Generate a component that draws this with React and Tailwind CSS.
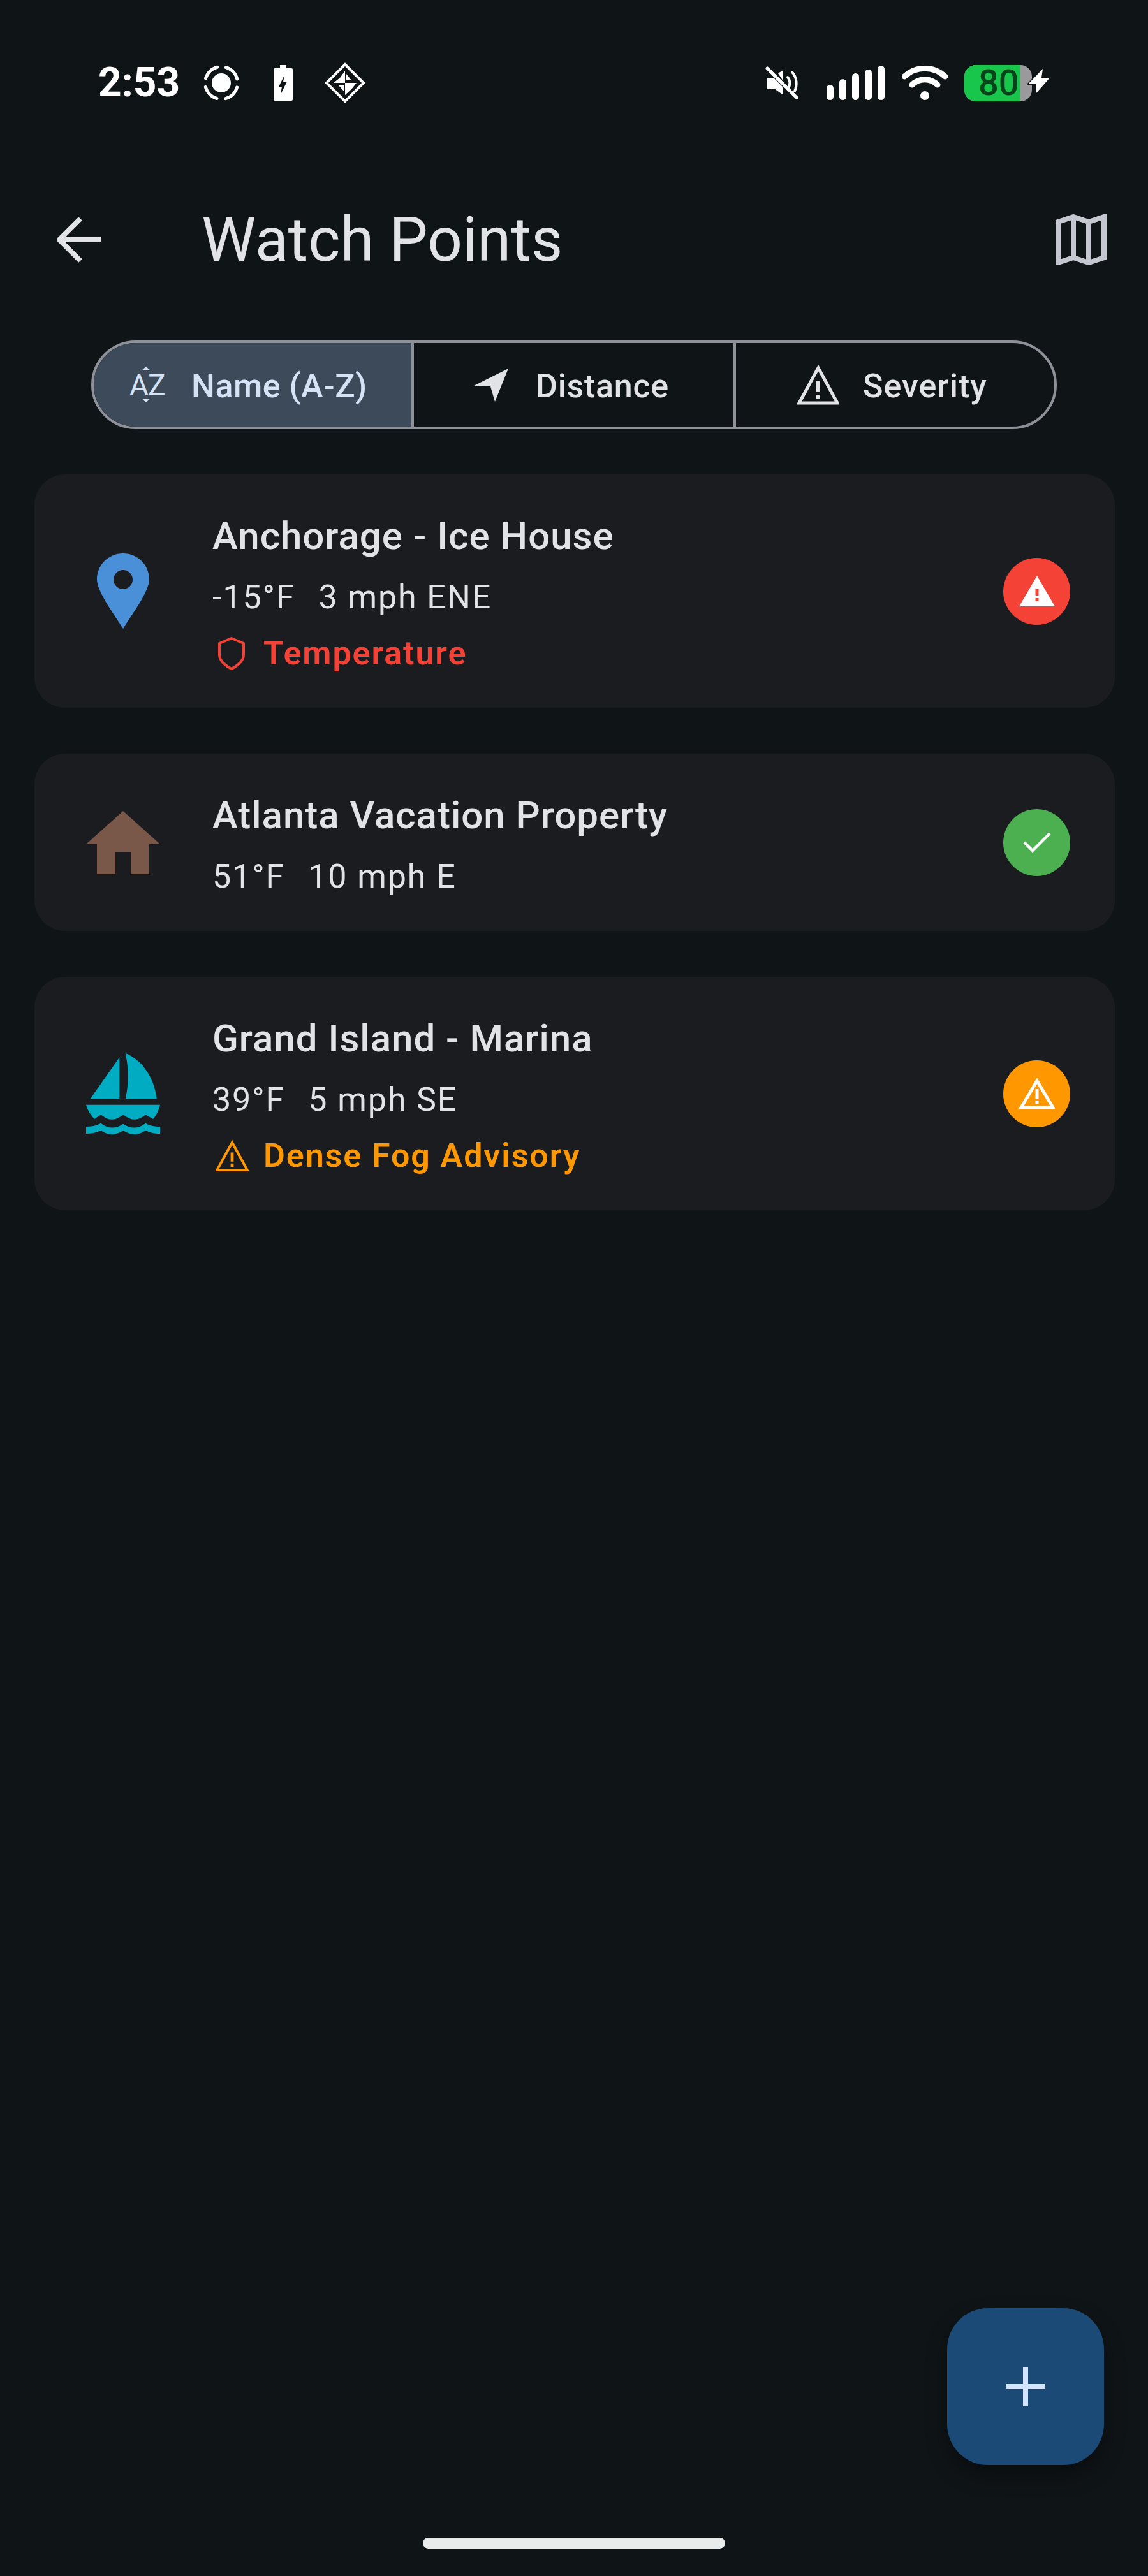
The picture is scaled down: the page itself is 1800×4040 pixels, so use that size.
// App.jsx
const roboto = "font-['Roboto',sans-serif]";

function StatusBar() {
  return (
    <div className="flex items-center h-[66px] mt-[97px] pl-[154px] pr-[152px] text-white">
      <span className="text-[64px] leading-[66px] font-bold w-[164px]">2:53</span>
      {/* screen record */}
      <svg width="58" height="58" viewBox="0 0 58 58">
        <circle cx="29" cy="29" r="15" fill="#fff" />
        <circle cx="29" cy="29" r="25.5" fill="none" stroke="#fff" strokeWidth="5" strokeDasharray="26 14" strokeDashoffset="-7" strokeLinecap="round" />
      </svg>
      {/* charging battery */}
      <svg width="30" height="56" viewBox="0 0 30 56" className="ml-[53px]">
        <path fillRule="evenodd" fill="#fff" d="M10 0h10v5h8a2 2 0 0 1 2 2v47a2 2 0 0 1-2 2H2a2 2 0 0 1-2-2V7a2 2 0 0 1 2-2h8zM17 16L8 34h5l-2 12 10-20h-6z" />
      </svg>
      {/* vpn diamond */}
      <svg width="64" height="64" viewBox="0 0 64 64" className="ml-[50px]">
        <path d="M32 3L61 32 32 61 3 32z" fill="none" stroke="#fff" strokeWidth="4" />
        <path d="M32 13v19H14l10-8zM32 32h18l-8 10-10 9z" fill="#fff" />
        <path d="M34 18l8 10h-8zM30 36v9l-8-9z" fill="#fff" />
      </svg>
      <div className="flex-1" />
      {/* muted */}
      <svg width="52" height="52" viewBox="0 0 52 52">
        <path d="M3 19h11l14 14v12L14 35H3z" fill="#fff" />
        <path d="M20 11l8-5v17z" fill="#fff" />
        <path d="M35 17c4 5 4 11 2 16M42 9c8 9 8 21 4 30" fill="none" stroke="#fff" strokeWidth="4" strokeLinecap="round" />
        <path d="M3 3l47 47" stroke="#fff" strokeWidth="5" strokeLinecap="round" />
      </svg>
      {/* signal */}
      <div className="flex items-end gap-[9px] h-[54px] ml-[44px]">
        <div className="w-[11px] h-[24px] rounded-full bg-white" />
        <div className="w-[11px] h-[33px] rounded-full bg-white" />
        <div className="w-[11px] h-[42px] rounded-full bg-white" />
        <div className="w-[11px] h-[48px] rounded-full bg-white" />
        <div className="w-[11px] h-[54px] rounded-full bg-white" />
      </div>
      {/* wifi */}
      <svg width="72" height="54" viewBox="0 0 72 54" className="ml-[27px]">
        <path d="M4 17C22 0 50 0 68 17M16 30C27 19 45 19 56 30" fill="none" stroke="#fff" strokeWidth="9" strokeLinecap="round" />
        <circle cx="36" cy="47" r="7" fill="#fff" />
      </svg>
      {/* battery */}
      <div className="flex ml-[26px] w-[106px] h-[57px] rounded-[18px] bg-[#9a9a9c]">
        <div className="w-[87px] h-full rounded-l-[18px] bg-[#17c64a] flex items-center pl-[22px]">
          <span className="text-[56px] leading-[57px] font-medium text-[#06451c]">80</span>
        </div>
      </div>
      <svg width="38" height="42" viewBox="0 0 38 42" className="-ml-[8px] -mt-[4px] relative">
        <path d="M25 1L2 25H15L14 40L36 15H23z" fill="#fff" stroke="#10151a" strokeWidth="3" paintOrder="stroke" />
      </svg>
    </div>
  );
}

function AppHeader() {
  return (
    <div className="flex items-center h-[96px] mt-[165px] pl-[89px] pr-[65px]">
      <svg width="72" height="72" viewBox="0 0 72 72">
        <path d="M70 36H6M37 3L4 36l33 33" fill="none" stroke="#e2e3e7" strokeWidth="8" />
      </svg>
      <h1 className="ml-[155px] text-[96px] leading-[96px] font-normal text-[#e2e3e7] flex-1">Watch Points</h1>
      <svg width="80" height="80" viewBox="0 0 80 80">
        <path d="M4 12l24-8 24 8 24-8v64l-24 8-24-8-24 8zM28 4v64M52 12v64" fill="none" stroke="#c4c7cf" strokeWidth="8" />
      </svg>
    </div>
  );
}

function SortTabs() {
  return (
    <div className="flex h-[139px] mt-[110px] mx-[143px] rounded-full border-[4px] border-[#8e9197] overflow-hidden">
      <div className="w-[502px] flex items-center bg-[#3d4a5a] text-[#d6e3f7] border-r-[4px] border-[#8e9197]">
        <svg width="60" height="58" viewBox="0 0 60 58" className="ml-[53px]">
          <path d="M29 0l7 6H22zM29 56l7-6H22z" fill="#d6e3f7" />
          <text x="3" y="45" fontSize="46" letterSpacing="-1" fill="#d6e3f7">AZ</text>
        </svg>
        <span className="ml-[40px] mt-[4px] text-[52px] tracking-[0.5px] font-medium leading-none">Name (A-Z)</span>
      </div>
      <div className="w-[505px] flex items-center text-[#e2e3e7] border-r-[4px] border-[#8e9197]">
        <svg width="54" height="52" viewBox="0 0 54 52" className="ml-[94px]">
          <path d="M54 0L0 27l26 1 7 24z" fill="#e2e3e7" />
        </svg>
        <span className="ml-[43px] mt-[4px] text-[52px] tracking-[0.7px] font-medium leading-none">Distance</span>
      </div>
      <div className="flex-1 flex items-center text-[#e2e3e7]">
        <WarnOutline size={66} color="#e2e3e7" className="ml-[96px]" />
        <span className="ml-[37px] mt-[4px] text-[52px] tracking-[1px] font-medium leading-none">Severity</span>
      </div>
    </div>
  );
}

function WarnOutline({ size, color, className }) {
  return (
    <svg width={size} height={size} viewBox="0 0 66 66" className={className}>
      <path d="M33 6L3 61h60z" fill="none" stroke={color} strokeWidth="5" />
      <path d="M30 26h6v18h-6zM30 48h6v7h-6z" fill={color} />
    </svg>
  );
}

function PinIcon() {
  return (
    <svg width="82" height="118" viewBox="0 0 82 118">
      <path fillRule="evenodd" fill="#4a90d9" d="M41 0C18 0 0 18 0 41C0 60 30 100 41 118C52 100 82 60 82 41C82 18 64 0 41 0zM41 26a15 15 0 1 1 0 30 15 15 0 0 1 0-30z" />
    </svg>
  );
}

function HomeIcon() {
  return (
    <svg width="116" height="99" viewBox="0 0 116 99">
      <path fill="#7a5849" d="M58 0L116 52H99V99H70V64H46V99H17V52H0z" />
    </svg>
  );
}

function BoatIcon() {
  return (
    <svg width="118" height="129" viewBox="0 0 118 129">
      <path fill="#00acc1" d="M53.300 7.300V72.300H7.700zM62.700 0.700C90 12 108 40 111.700 72.300H62.700C68 50 68 25 62.700 0.700z" />
      <path fill="#00acc1" d="M1 81.700H117C115 90 112 97 106 104L94.300 97.300Q77 112 59.300 97.300Q41 112 24.300 97.300L14 104C8 97 3 90 1 81.700z" />
      <path fill="#00acc1" d="M1 116C10 116 18 114 24.300 110.700Q41 124 59.300 111.700Q77 124 94.300 110.700C100 114 108 116 117 116V127C108 127 100 125 94.300 122Q77 134 59.300 122Q41 134 24.300 122C18 125 10 127 1 127z" />
    </svg>
  );
}

function StatusBadge({ kind }) {
  const bg = kind === "red" ? "bg-[#f44336]" : kind === "green" ? "bg-[#4caf50]" : "bg-[#ff9800]";
  return (
    <div className={`w-[105px] h-[105px] rounded-full flex items-center justify-center shrink-0 ${bg}`}>
      {kind === "red" && (
        <svg width="56" height="48" viewBox="0 0 56 48">
          <path fillRule="evenodd" fill="#fff" d="M28 0L56 48H0zM25.500 20V31H30.500V20zM25.500 35V40H30.500V35z" />
        </svg>
      )}
      {kind === "green" && (
        <svg width="44" height="34" viewBox="0 0 44 34">
          <path d="M2 17l13 13L42 3" fill="none" stroke="#fff" strokeWidth="4.5" />
        </svg>
      )}
      {kind === "orange" && (
        <svg width="56" height="48" viewBox="0 0 56 48">
          <path d="M28 4L3 46h50z" fill="none" stroke="#fff" strokeWidth="5" />
          <path d="M25.500 17h5v15h-5zM25.500 35h5v5h-5z" fill="#fff" />
        </svg>
      )}
    </div>
  );
}

function WatchCard({ icon, name, temp, wind, alert, alertColor, alertIcon, badge }) {
  return (
    <div className="flex items-center ml-[54px] mr-[52px] rounded-[48px] bg-[#1b1c20] pl-[80px] pr-[70px]">
      <div className="w-[118px] flex justify-center shrink-0">{icon}</div>
      <div className="ml-[81px] flex-1 pt-[57px] pb-[49px]">
        <div className="text-[60px] leading-[80px] tracking-[1px] font-medium text-[#e2e3e7]">{name}</div>
        <div className="mt-[20px] flex gap-[36px] text-[52px] leading-[72px] tracking-[1.9px] text-[#e2e3e7]">
          <span>{temp}</span>
          <span>{wind}</span>
        </div>
        {alert && (
          <div className="mt-[16px] flex items-center h-[72px]">
            <div className="w-[80px] shrink-0 flex justify-start pl-[5px]">{alertIcon}</div>
            <span className="text-[52px] leading-[72px] font-semibold tracking-[1.9px]" style={{ color: alertColor }}>{alert}</span>
          </div>
        )}
      </div>
      <StatusBadge kind={badge} />
    </div>
  );
}

export default function App() {
  return (
    <div className={`relative h-[4040px] bg-[#0f1417] overflow-hidden ${roboto}`}>
      <StatusBar />
      <AppHeader />
      <SortTabs />
      <div className="flex flex-col gap-[72px] mt-[71px]">
        <WatchCard
          icon={<PinIcon />}
          name="Anchorage - Ice House"
          temp="-15°F"
          wind="3 mph ENE"
          alert="Temperature"
          alertColor="#f44336"
          alertIcon={
            <svg width="44" height="52" viewBox="0 0 44 52" className="ml-[3px]">
              <path d="M22 2L41 10V28C41 38 30 46 22 50C14 46 3 38 3 28V10z" fill="none" stroke="#f44336" strokeWidth="4" />
            </svg>
          }
          badge="red"
        />
        <WatchCard icon={<HomeIcon />} name="Atlanta Vacation Property" temp="51°F" wind="10 mph E" badge="green" />
        <WatchCard
          icon={<BoatIcon />}
          name="Grand Island - Marina"
          temp="39°F"
          wind="5 mph SE"
          alert="Dense Fog Advisory"
          alertColor="#ff9800"
          alertIcon={<WarnOutline size={52} color="#ff9800" />}
          badge="orange"
        />
      </div>
      <button className="absolute left-[1485px] top-[3620px] w-[246px] h-[246px] rounded-[64px] bg-[#1a4a75] flex items-center justify-center shadow-[0_16px_32px_rgba(0,0,0,0.35)]">
        <svg width="62" height="62" viewBox="0 0 62 62">
          <path d="M31 0v62M0 31h62" stroke="#d3e4ff" strokeWidth="8" />
        </svg>
      </button>
      <div className="absolute left-[663px] top-[3980px] w-[474px] h-[17px] rounded-full bg-[#e9eaea]" />
    </div>
  );
}
